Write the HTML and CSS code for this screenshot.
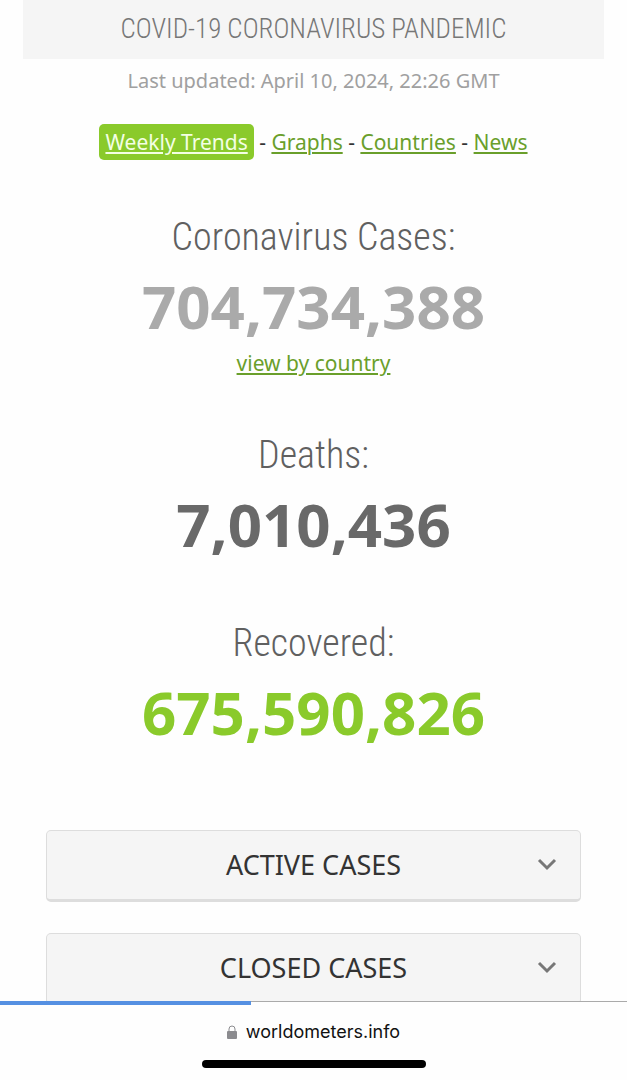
FILE: index.html
```
<!DOCTYPE html>
<html lang="en">
<head>
    <meta charset="UTF-8">
    <meta name="viewport" content="width=device-width, initial-scale=1">
    <title>COVID-19 Coronavirus Pandemic</title>
    <link rel="stylesheet" href="styles.css">
</head>
<body>
    <main class="content">
        <h1 class="page-title">COVID-19 CORONAVIRUS PANDEMIC</h1>
        <p class="updated">Last updated: April 10, 2024, 22:26 GMT</p>
        <nav class="links">
            <a class="active" href="#trends">Weekly Trends</a> -
            <a href="#graphs">Graphs</a> -
            <a href="#countries">Countries</a> -
            <a href="#news">News</a>
        </nav>

        <section class="counter cases">
            <h2>Coronavirus Cases:</h2>
            <div class="number">704,734,388</div>
            <a href="#countries">view by country</a>
        </section>
        <section class="counter deaths">
            <h2>Deaths:</h2>
            <div class="number">7,010,436</div>
        </section>
        <section class="counter recovered">
            <h2>Recovered:</h2>
            <div class="number">675,590,826</div>
        </section>

        <div class="panels">
            <button class="panel" type="button">
                <span>ACTIVE CASES</span>
                <svg class="chevron" viewBox="0 0 20 14" aria-hidden="true"><path d="M2 3l8 8 8-8"/></svg>
            </button>
            <button class="panel" type="button">
                <span>CLOSED CASES</span>
                <svg class="chevron" viewBox="0 0 20 14" aria-hidden="true"><path d="M2 3l8 8 8-8"/></svg>
            </button>
        </div>
    </main>

    <footer class="browser-bar">
        <div class="progress"></div>
        <div class="address">
            <svg class="lock" viewBox="0 0 10 14" aria-hidden="true">
                <path class="shackle" d="M2 7V4a3 3 0 0 1 6 0v3"/>
                <rect y="6" width="10" height="8" rx="1"/>
            </svg>
            <span>worldometers.info</span>
        </div>
        <div class="home-indicator"></div>
    </footer>
</body>
</html>
```
FILE: styles.css
```
* {
    box-sizing: border-box;
}

body {
    margin: 0;
    height: 100vh;
    display: flex;
    flex-direction: column;
    overflow: hidden;
    background: #fefefe;
    color: #333;
    font-family: "Noto Sans", "Open Sans", sans-serif;
    font-size: 21px;
    text-align: center;
}

h1, h2, p {
    margin: 0;
}

a {
    color: #6a9f2b;
    text-underline-offset: 2px;
    text-decoration-thickness: 2px;
}

.content {
    flex: 1;
    min-height: 0;
    overflow: hidden;
    padding: 0 23px;
}

.page-title {
    height: 59px;
    background: #f5f5f5;
    color: #777;
    font-family: "Roboto Condensed", Roboto, sans-serif;
    font-size: 27px;
    font-weight: 300;
    line-height: 58px;
}

.updated {
    padding-top: 8px;
    color: #a0a0a0;
    font-size: 20px;
    line-height: 28px;
}

.links {
    margin-top: 29px;
    line-height: 36px;
}

.links .active {
    display: inline-block;
    padding: 0 6px;
    border-radius: 5px;
    background: #8aca2b;
    color: #f4ffe4;
}

.counter {
    margin-bottom: 50px;
    line-height: 32px;
}

.counter h2 {
    color: #606060;
    font-family: "Roboto Condensed", Roboto, sans-serif;
    font-size: 38px;
    font-weight: 300;
    line-height: 56px;
}

.cases {
    margin-top: 49px;
    margin-bottom: 48px;
}

.number {
    font-size: 60px;
    font-weight: 700;
    line-height: 82px;
}

.cases .number {
    color: #aaa;
}

.deaths .number {
    color: #696969;
}

.recovered .number {
    color: #8aca2b;
}

.panels {
    display: grid;
    gap: 31px;
    margin-top: 77px;
    padding: 0 23px;
}

.panel {
    display: grid;
    grid-template-columns: 1fr auto 1fr;
    align-items: center;
    height: 72px;
    padding: 0 23px 2px;
    border: 1px solid #ddd;
    border-bottom-width: 3px;
    border-radius: 5px;
    background: #f5f5f5;
    color: #333;
    font: inherit;
    font-size: 27px;
}

.panel span {
    grid-column: 2;
}

.chevron {
    justify-self: end;
    width: 20px;
    height: 14px;
    fill: none;
    stroke: #777;
    stroke-width: 3;
}

.browser-bar {
    display: flex;
    flex-direction: column;
    align-items: center;
    height: 79px;
    border-top: 1px solid #aaa;
    background: #fefefe;
}

.progress {
    align-self: flex-start;
    width: 40%;
    height: 4px;
    margin-top: -1px;
    background: #5590e2;
}

.address {
    display: flex;
    align-items: center;
    gap: 9px;
    margin-top: 14px;
    color: #111;
    font-family: Inter, sans-serif;
    font-size: 18px;
    line-height: 26px;
}

.lock {
    width: 10px;
    height: 14px;
    fill: #8b8b8f;
}

.shackle {
    fill: none;
    stroke: #8b8b8f;
}

.home-indicator {
    width: 224px;
    height: 8px;
    margin-top: 15px;
    border-radius: 4px;
    background: #000;
}
```
